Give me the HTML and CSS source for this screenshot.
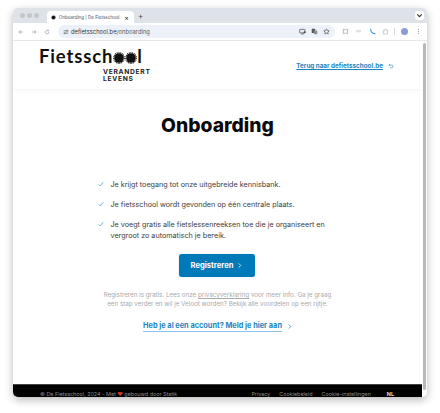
FILE: index.html
```html
<!DOCTYPE html>
<html lang="nl">
<head>
<meta charset="utf-8">
<title>Onboarding | De Fietsschool</title>
<link rel="stylesheet" href="styles.css">
</head>
<body>
<div class="window">
  <div class="tabbar">
    <div class="lights"><i></i><i></i><i></i></div>
    <div class="tab">
      <svg class="fav" viewBox="0 0 10 10"><circle cx="5" cy="5" r="3.6" fill="#111"/><circle cx="5" cy="5" r="4.4" fill="none" stroke="#111" stroke-width="1" stroke-dasharray="1 .8"/></svg>
      <span class="tabtitle">Onboarding | De Fietsschool</span>
      <span class="tabx">×</span>
    </div>
    <span class="plus">+</span>
    <span class="grow"></span>
    <div class="tabmenu"><svg viewBox="0 0 8 8"><path d="M2 3l2 2 2-2" fill="none" stroke="#333" stroke-width="1"/></svg></div>
  </div>
  <div class="toolbar">
    <svg class="nav" viewBox="0 0 10 10"><path d="M8.5 5h-7M4.5 2l-3 3 3 3" fill="none" stroke="#8a8f96" stroke-width="1"/></svg>
    <svg class="nav" viewBox="0 0 10 10"><path d="M1.500 5h7M5.500 2l3 3-3 3" fill="none" stroke="#8a8f96" stroke-width="1"/></svg>
    <svg class="nav" viewBox="0 0 10 10"><path d="M8 5a3 3 0 1 1-1-2.200M7.500 1.200v2h-2" fill="none" stroke="#8a8f96" stroke-width="1"/></svg>
    <div class="omnibox">
      <svg class="tune" viewBox="0 0 10 10"><path d="M1 3h5M8 3h1M1 7h1M4 7h5" stroke="#444" stroke-width="1"/><circle cx="7" cy="3" r="1.200" fill="none" stroke="#444" stroke-width=".8"/><circle cx="3" cy="7" r="1.200" fill="none" stroke="#444" stroke-width=".8"/></svg>
      <span class="url">defietsschool.be<span class="path">/onboarding</span></span>
      <span class="grow"></span>
      <svg class="ob-ic" viewBox="0 0 10 10"><rect x="1" y="2" width="7.500" height="5" rx=".6" fill="none" stroke="#444" stroke-width="1"/><path d="M3 8.500h4" stroke="#444"/><circle cx="8" cy="6" r="1.500" fill="#444"/></svg>
      <svg class="ob-ic" viewBox="0 0 10 10"><rect x="1" y="1" width="5" height="6" rx=".6" fill="#555"/><rect x="4" y="3.500" width="5" height="5.500" rx=".6" fill="#8a8f96"/></svg>
      <svg class="ob-ic" viewBox="0 0 10 10"><path d="M5 1.200l1.150 2.500 2.750.3-2 1.900.55 2.700L5 7.250 2.550 8.600l.55-2.700-2-1.900 2.750-.3z" fill="none" stroke="#444" stroke-width=".9"/></svg>
    </div>
    <svg class="ext" viewBox="0 0 10 10"><path d="M1 1.500h1M8 1.500h1M1 8.500h1M8 8.500h1M2 2.500h6v5H2z" fill="none" stroke="#9aa0a6" stroke-width="1"/></svg>
    <svg class="ext" viewBox="0 0 10 10"><path d="M1.500 3h7v3H6L4.500 7.500V6h-3z" fill="#dfe2e5"/></svg>
    <svg class="ext" viewBox="0 0 10 10"><path d="M2.500 1.500C2 5 5 8.500 8.500 8" fill="none" stroke="#3aa0d8" stroke-width="1.600" stroke-linecap="round"/></svg>
    <svg class="ext" viewBox="0 0 10 10"><path d="M2 3h2V1.800h2V3h2v5.500H2z" fill="none" stroke="#b4b8bc" stroke-width="1"/></svg>
    <span class="sep"></span>
    <span class="avatar"></span>
    <span class="dots"><i></i><i></i><i></i></span>
  </div>
  <div class="viewport">
    <div class="page">
      <header class="site-head">
        <div class="logo">
          <div class="wordmark">Fietssch<svg class="cog" viewBox="0 0 12 12"><circle cx="6" cy="6" r="4.800" fill="#111"/><circle cx="6" cy="6" r="5.300" fill="none" stroke="#111" stroke-width="1.200" stroke-dasharray=".9 .8"/></svg><svg class="cog" viewBox="0 0 12 12"><circle cx="6" cy="6" r="4.800" fill="#111"/><circle cx="6" cy="6" r="5.300" fill="none" stroke="#111" stroke-width="1.200" stroke-dasharray=".9 .8"/></svg>l</div>
          <div class="tagline">VERANDERT<br>LEVENS</div>
        </div>
        <a class="back">Terug naar defietsschool.be</a>
        <svg class="back-ic" viewBox="0 0 10 10"><path d="M3.500 1.500L1.500 3.500l2 2M1.500 3.500H6a2.200 2.200 0 0 1 0 4.500H3.500" fill="none" stroke="#1e84bd" stroke-width="1"/></svg>
      </header>
      <main class="main">
        <h1>Onboarding</h1>
        <ul class="usps">
          <li><svg class="check" viewBox="0 0 8 8"><path d="M1 4.500l2 2 4-5" fill="none" stroke="#3e9fd2" stroke-width="1"/></svg><span>Je krijgt toegang tot onze uitgebreide kennisbank.</span></li>
          <li><svg class="check" viewBox="0 0 8 8"><path d="M1 4.500l2 2 4-5" fill="none" stroke="#3e9fd2" stroke-width="1"/></svg><span>Je fietsschool wordt gevonden op één centrale plaats.</span></li>
          <li><svg class="check" viewBox="0 0 8 8"><path d="M1 4.500l2 2 4-5" fill="none" stroke="#3e9fd2" stroke-width="1"/></svg><span>Je voegt gratis alle fietslessenreeksen toe die je organiseert en vergroot zo automatisch je bereik.</span></li>
        </ul>
        <a class="cta">Registreren<svg class="chev" viewBox="0 0 6 8"><path d="M2 1.500L4.500 4 2 6.500" fill="none" stroke="currentColor" stroke-width=".9"/></svg></a>
        <p class="note">Registreren is gratis. Lees onze <u>privacyverklaring</u> voor meer info. Ga je graag<br>een stap verder en wil je Veloot worden? Bekijk alle voordelen op een rijtje.</p>
        <div class="login"><a>Heb je al een account? Meld je hier aan</a><svg class="chev" viewBox="0 0 6 8"><path d="M2 1.500L4.500 4 2 6.500" fill="none" stroke="currentColor" stroke-width=".9"/></svg></div>
      </main>
      <footer class="foot">
        <span class="copy">© De Fietsschool, 2024 - Met <span class="heart">♥</span> gebouwd door <u>Statik</u></span>
        <span class="grow"></span>
        <u>Privacy</u><u>Cookiebeleid</u><u>Cookie-instellingen</u><b>NL</b>
      </footer>
    </div>
    <div class="scroll"><div class="thumb"></div></div>
  </div>
</div>
</body>
</html>
```
FILE: styles.css
```css
* { box-sizing: border-box; }
html, body { margin: 0; height: 100%; background: #fff; overflow: hidden; }
body { padding: 8px 13px 16px; font-family: "Inter", "Liberation Sans", sans-serif; }
.grow { flex: 1; }
.window { height: 389px; display: flex; flex-direction: column; border-radius: 5px; overflow: hidden; box-shadow: 0 3px 9px rgba(0,0,0,.28); background: #fff; }
.tabbar { height: 15px; flex: none; background: #dee3e9; display: flex; align-items: flex-end; padding-left: 7px; padding-right: 3px; }
.lights { display: flex; gap: 1px; align-self: center; width: 27px; }
.lights i { width: 5px; height: 5px; border-radius: 50%; background: #c4c7cb; margin-right: 1px; }
.tab { width: 87px; height: 12px; background: #fff; border-radius: 4px 4px 0 0; display: flex; align-items: center; padding: 0 5px 0 4px; font-size: 4.5px; color: #4b4f55; }
.fav { width: 5px; height: 5px; flex: none; margin-right: 3px; }
.tabtitle { flex: 1; white-space: nowrap; }
.tabx { font-size: 7px; color: #333; line-height: 1; }
.plus { font-size: 8px; line-height: 1; color: #444; margin-left: 4px; align-self: center; }
.tabmenu { width: 9px; height: 9px; background: #fff; border-radius: 3px; align-self: center; display: flex; }
.tabmenu svg { width: 9px; height: 9px; }
.toolbar { height: 18px; flex: none; background: #fff; display: flex; align-items: center; padding: 0 6px 0 5px; border-bottom: 1px solid #e8eaed; }
.nav { width: 6px; height: 6px; margin-right: 7px; flex: none; }
.nav:nth-child(3) { margin-right: 8px; }
.omnibox { width: 277px; height: 13px; background: #edf2fa; border-radius: 7px; display: flex; align-items: center; padding: 0 5px; flex: none; }
.tune { width: 6px; height: 6px; margin-right: 2px; flex: none; }
.url { font-size: 5.8px; color: #33373c; white-space: nowrap; }
.path { color: #555a60; }
.ob-ic { width: 7px; height: 7px; margin-left: 5px; flex: none; }
.ext { width: 7px; height: 7px; margin-left: 6.500px; flex: none; }
.sep { width: 1px; height: 7px; background: #d5dae0; margin: 0 6px 0 5px; }
.avatar { width: 7px; height: 7px; border-radius: 50%; background: #8a9bd8; }
.dots { display: flex; flex-direction: column; gap: 1px; margin-left: 10px; }
.dots i { width: 1px; height: 1px; background: #9aa0a6; }
.viewport { flex: 1; min-height: 0; display: flex; }
.page { flex: 1; min-width: 0; display: flex; flex-direction: column; }
.scroll { width: 5px; flex: none; background: #fbfbfb; padding: 2px 0 7px 1px; }
.thumb { height: 100%; width: 3px; background: #b9b9b9; border-radius: 2px; }
.site-head { height: 48px; flex: none; display: flex; align-items: center; padding-left: 26px; padding-right: 28px; box-shadow: 0 1px 4px rgba(0,0,0,.05); }
.logo { flex: 1; align-self: flex-start; padding-top: 6px; }
.wordmark { font-family: "Lato", sans-serif; font-weight: 700; font-size: 18.500px; line-height: 18px; letter-spacing: .85px; color: #111; display: flex; align-items: center; }
.cog { width: 12px; height: 12px; margin: 3px 0 0 0; flex: none; }
.tagline { font-family: "Inter", sans-serif; font-weight: 700; font-size: 6.7px; line-height: 7px; letter-spacing: .7px; color: #222; margin: 4px 0 0 64px; }
.back { font-weight: 700; font-size: 6.300px; color: #1e84bd; text-decoration: underline; white-space: nowrap; margin-top: 2px; }
.back-ic { width: 6px; height: 6px; margin: 2px 0 0 5px; }
.main { flex: 1; min-height: 0; display: flex; flex-direction: column; align-items: center; padding-top: 24px; }
h1 { margin: 0; font-family: "Inter", sans-serif; font-weight: 800; font-size: 19.300px; line-height: 24px; color: #0b0b0b; }
.usps { list-style: none; margin: 33px 0 0; padding: 0; width: 240px; font-size: 7.2px; line-height: 11px; color: #3c3c3c; }
.usps li { display: flex; margin-top: 9px; }
.check { width: 6px; height: 6px; flex: none; margin: 2px 7px 0 0; }
.cta { margin: 13px 0 0 -2px; width: 76px; height: 23px; border-radius: 3px; background: #0079b8; color: #fff; display: flex; align-items: center; justify-content: center; gap: 4px; font-weight: 700; font-size: 7.6px; box-shadow: 0 0 1px #6fb7dd; }
.chev { width: 5px; height: 7px; flex: none; }
.note { margin: 14px 0 0; font-size: 6.250px; line-height: 9.300px; color: #a9a9a9; text-align: center; }
.login { margin-top: 11px; display: flex; align-items: center; gap: 5px; color: #1e84bd; font-weight: 700; font-size: 7.350px; }
.login a { border-bottom: 1px solid #8cc5e3; padding-bottom: 1px; }
.foot { height: 13px; flex: none; background: #000; color: #8b8b8b; font-size: 5.400px; display: flex; align-items: flex-start; padding: 5px 28px 0 27px; gap: 9px; line-height: 8px; white-space: nowrap; border-top: 1px solid #444; }
.foot b { color: #ddd; margin-left: 7px; }
.heart { color: #d9301e; }
```
